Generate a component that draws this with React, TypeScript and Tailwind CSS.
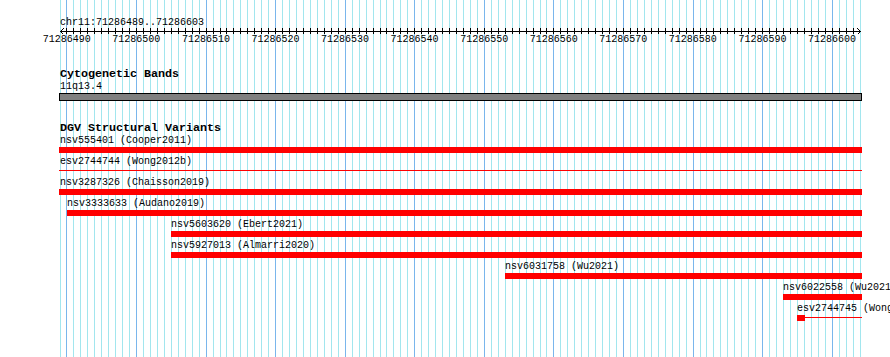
const PX = 800 / 115;
const gx = (i: number) => Math.floor(60 + i * PX) + 0.5;

const ticks = [
  "71286490",
  "71286500",
  "71286510",
  "71286520",
  "71286530",
  "71286540",
  "71286550",
  "71286560",
  "71286570",
  "71286580",
  "71286590",
  "71286600",
];

type Variant = {
  name: string;
  labelCls: string;
  barCls: string;
  kind: "thick" | "thin" | "stub";
};

const variants: Variant[] = [
  { name: "nsv555401 (Cooper2011)", labelCls: "ml-[60px]", barCls: "ml-[59px] w-[803px]", kind: "thick" },
  { name: "esv2744744 (Wong2012b)", labelCls: "ml-[60px]", barCls: "ml-[59px] w-[803px]", kind: "thin" },
  { name: "nsv3287326 (Chaisson2019)", labelCls: "ml-[60px]", barCls: "ml-[59px] w-[803px]", kind: "thick" },
  { name: "nsv3333633 (Audano2019)", labelCls: "ml-[67px]", barCls: "ml-[67px] w-[795px]", kind: "thick" },
  { name: "nsv5603620 (Ebert2021)", labelCls: "ml-[171px]", barCls: "ml-[171px] w-[691px]", kind: "thick" },
  { name: "nsv5927013 (Almarri2020)", labelCls: "ml-[171px]", barCls: "ml-[171px] w-[691px]", kind: "thick" },
  { name: "nsv6031758 (Wu2021)", labelCls: "ml-[505px]", barCls: "ml-[505px] w-[357px]", kind: "thick" },
  { name: "nsv6022558 (Wu2021)", labelCls: "ml-[783px]", barCls: "ml-[783px] w-[79px]", kind: "thick" },
  { name: "esv2744745 (Wong2012b)", labelCls: "ml-[797px]", barCls: "ml-[797px] w-[65px]", kind: "stub" },
];

function Grid() {
  return (
    <svg className="absolute inset-0" width={890} height={357} shapeRendering="crispEdges">
      {Array.from({ length: 116 }, (_, i) => (
        <line
          key={i}
          x1={gx(i)}
          x2={gx(i)}
          y1={0}
          y2={357}
          stroke={(489 + i) % 10 === 0 ? "#7ab6ec" : "#a2e6ee"}
          strokeWidth={1}
        />
      ))}
    </svg>
  );
}

function Ruler() {
  return (
    <svg width={890} height={6} className="block" shapeRendering="crispEdges">
      <line x1={60} x2={861} y1={3.5} y2={3.5} stroke="#000" />
      {Array.from({ length: 114 }, (_, i) => (
        <line key={i} x1={gx(i + 1)} x2={gx(i + 1)} y1={0} y2={6} stroke="#000" />
      ))}
      <polyline points="63.5,0.5 60.5,3.5 63.5,6.5" fill="none" stroke="#000" />
      <polyline points="857.5,0.5 860.5,3.5 857.5,6.5" fill="none" stroke="#000" />
    </svg>
  );
}

function Bar({ v }: { v: Variant }) {
  if (v.kind === "thick") return <div className={`h-[6px] bg-[#ff0000] ${v.barCls}`} />;
  if (v.kind === "thin")
    return (
      <div className={`h-[6px] pt-[2px] ${v.barCls}`}>
        <div className="h-px bg-[#ff0000]" />
      </div>
    );
  return (
    <div className={`h-[6px] flex ${v.barCls}`}>
      <div className="w-[8px] h-[6px] bg-[#ff0000]" />
      <div className="flex-1 h-px mt-[2px] bg-[#ff0000]" />
    </div>
  );
}

export default function App() {
  return (
    <div className="relative w-[890px] h-[357px] overflow-hidden bg-white text-black font-['Liberation_Mono',monospace] text-[10px]">
      <Grid />
      <div className="relative pt-[17px]">
        <div className="ml-[60px] h-[11px] leading-[12px] whitespace-nowrap">chr11:71286489..71286603</div>
        <Ruler />
        <div className="flex pl-[32px] h-[12px] leading-[12px]">
          {ticks.map((t) => (
            <div key={t} className="w-[69.565px] shrink-0 text-center">
              {t}
            </div>
          ))}
        </div>

        <div className="mt-[22px] ml-[60px] h-[13px] leading-[13px] text-[11.67px] font-bold">Cytogenetic Bands</div>
        <div className="ml-[60px] h-[12px] leading-[12px]">11q13.4</div>
        <div className="ml-[59px] w-[803px] h-[8px] bg-[#808080] border border-black" />

        <div className="mt-[21px] ml-[60px] h-[13px] leading-[13px] text-[11.67px] font-bold">DGV Structural Variants</div>
        {variants.map((v) => (
          <div key={v.name} className="h-[21px]">
            <div className={`h-[12px] leading-[12px] whitespace-nowrap ${v.labelCls}`}>{v.name}</div>
            <Bar v={v} />
          </div>
        ))}
      </div>
    </div>
  );
}
